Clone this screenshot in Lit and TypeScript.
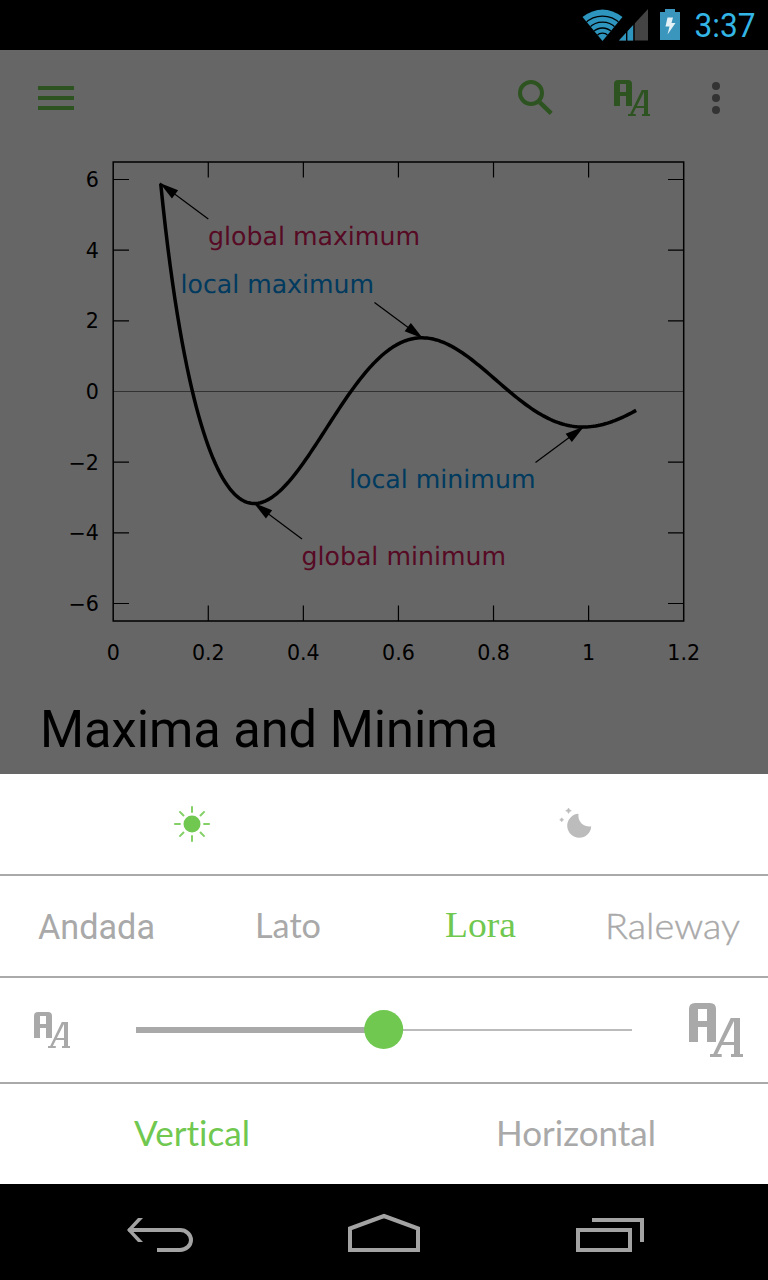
import { LitElement, html, svg, css } from "lit";
import { customElement, property } from "lit/decorators.js";

const AA = svg`<path fill-rule="evenodd" d="M0 26V4Q0 0 4 0H14Q18 0 18 4V26H12V16H6V26ZM6 4V12H12V4Z"/>
  <path fill-rule="evenodd" d="M14 34H16.2L27.8 10H34V34H36V36H28V34H30V28H21.9L18.9 34H21.8V36H14ZM22.9 26H30V12Z"/>`;

@customElement("aa-icon")
class AaIcon extends LitElement {
  static styles = css`:host { display: block; } svg { display: block; width: 100%; height: 100%; fill: currentColor; }`;
  render() { return html`<svg viewBox="0 0 36 36">${AA}</svg>`; }
}

@customElement("status-bar")
class StatusBar extends LitElement {
  static styles = css`
    :host { display: block; height: 50px; background: #000; }
    svg { display: block; }
    text { font-family: Roboto, sans-serif; font-size: 32.5px; fill: #33b5e5; }
  `;
  render() {
    return html`<svg width="768" height="50" viewBox="0 0 768 50">
      <clipPath id="fan"><path d="M602.5 41L582.5 17Q602.5 2 622.5 17Z"/></clipPath>
      <g clip-path="url(#fan)">
        <circle cx="602.5" cy="43" r="34" fill="#2d95be"/>
        <g fill="none" stroke="#000" stroke-width="1.3">
          <circle cx="602.5" cy="41" r="24.8"/><circle cx="602.5" cy="41" r="18.8"/>
          <circle cx="602.5" cy="41" r="13"/><circle cx="602.5" cy="41" r="7.8"/>
        </g>
      </g>
      <path d="M619 40.5L648 9V40.5Z" fill="#444"/>
      <path d="M619 40.5L633.5 24.8V40.5Z" fill="#2d95be"/>
      <path d="M626.7 30V41M634 23V41" stroke="#000" stroke-width="1.4"/>
      <path d="M660 12H665V9H675V12H680V40H660Z" fill="#3a96bd"/>
      <path d="M667.5 17.5H673L671.5 23H675.5L667.5 34.5L669.5 26.5H665.5Z" fill="#e4f1f6"/>
      <text x="694.5" y="37" textLength="61" lengthAdjust="spacingAndGlyphs">3:37</text>
    </svg>`;
  }
}

@customElement("top-bar")
class TopBar extends LitElement {
  static styles = css`
    :host { display: flex; align-items: center; height: 96px; box-sizing: border-box; padding: 0 48px 0 38px; color: #2d5420; }
    svg { display: block; fill: none; stroke: currentColor; stroke-width: 4; }
    .menu { margin-right: auto; }
    .search { margin-right: 61px; }
    .fonts { width: 36px; height: 36px; margin-right: 62px; }
    .more { fill: #333; stroke: none; }
  `;
  render() {
    return html`
      <svg class="menu" width="36" height="24"><path d="M0 2H36M0 12H36M0 22H36"/></svg>
      <svg class="search" width="35" height="36"><circle cx="13" cy="13" r="11"/><path d="M21.8 22.3L33.2 33.3" stroke-width="4.4"/></svg>
      <aa-icon class="fonts"></aa-icon>
      <svg class="more" width="8" height="32"><circle cx="4" cy="4" r="4"/><circle cx="4" cy="16" r="4"/><circle cx="4" cy="28" r="4"/></svg>
    `;
  }
}

const px = (x: number) => 113.2 + x * 475.4;
const py = (y: number) => 391.5 - y * 35.33;

@customElement("extrema-chart")
class ExtremaChart extends LitElement {
  static styles = css`
    :host { display: block; height: 534px; }
    svg { display: block; }
    .axis { font: 20.6px "DejaVu Sans", sans-serif; fill: #000; }
    .note { font: 25.4px "DejaVu Sans", sans-serif; text-rendering: geometricPrecision; }
    .global { fill: #560a24; }
    .local { fill: #003a5e; }
    .tick { stroke: #000; stroke-width: 1.2; }
    .frame { fill: none; stroke: #000; stroke-width: 1.5; }
    .zero { stroke: #333; stroke-width: 1; }
    .curve { fill: none; stroke: #000; stroke-width: 3.5; stroke-linejoin: round; }
  `;
  arrow(x1: number, y1: number, x2: number, y2: number) {
    const a = (Math.atan2(y2 - y1, x2 - x1) * 180) / Math.PI;
    return svg`<line class="tick" x1=${x1} y1=${y1} x2=${x2} y2=${y2}></line>
      <path transform="translate(${x2} ${y2}) rotate(${a})" d="M0 0L-19 -5.2V5.2Z"/>`;
  }
  render() {
    const pts: string[] = [];
    for (let i = 0; i <= 200; i++) {
      const x = 0.1 + i / 200;
      pts.push(`${px(x).toFixed(2)},${py(Math.cos(3 * Math.PI * x) / x).toFixed(2)}`);
    }
    const xs = [0, 0.2, 0.4, 0.6, 0.8, 1, 1.2];
    const ys = [6, 4, 2, 0, -2, -4, -6];
    return html`<svg width="768" height="534" viewBox="0 146 768 534">
      <line class="zero" x1="113" x2="684" y1="391.5" y2="391.5"></line>
      <rect class="frame" x="113.2" y="162" width="570.5" height="459"></rect>
      ${xs.map((x) => svg`
        ${x > 0 && x < 1.2 ? svg`<path class="tick" d="M${px(x)} 162V177.5M${px(x)} 621V605.5"/>` : ""}
        <text class="axis" text-anchor="middle" x=${px(x)} y="659.5">${x}</text>`)}
      ${ys.map((y) => svg`
        ${y ? svg`<path class="tick" d="M113 ${py(y)}H129M684 ${py(y)}H668"/>` : ""}
        <text class="axis" text-anchor="end" x="98.8" y=${py(y) + 7.6}>${String(y).replace("-", "−")}</text>`)}
      <polyline class="curve" points=${pts.join(" ")}></polyline>
      ${this.arrow(208.3, 219, 159.8, 183)}
      ${this.arrow(374.5, 302.5, 423, 338.5)}
      ${this.arrow(535.5, 462.5, 584, 426.5)}
      ${this.arrow(302, 539, 253.8, 503)}
      <text class="note global" x="208" y="244.6" textLength="212" lengthAdjust="spacingAndGlyphs">global maximum</text>
      <text class="note local" x="180.5" y="292.8" textLength="193.5" lengthAdjust="spacingAndGlyphs">local maximum</text>
      <text class="note local" x="349" y="487.8" textLength="186.5" lengthAdjust="spacingAndGlyphs">local minimum</text>
      <text class="note global" x="301.5" y="564.6" textLength="204.5" lengthAdjust="spacingAndGlyphs">global minimum</text>
    </svg>`;
  }
}

@customElement("font-name")
class FontName extends LitElement {
  @property() name = "";
  @property() face = "lato";
  @property({ type: Number }) width = 100;
  @property({ type: Number }) base = 37;
  static styles = css`
    :host { display: flex; justify-content: center; }
    svg { display: block; overflow: visible; fill: currentColor; }
    .andada { font: 35px Roboto, sans-serif; }
    .lato { font: 35.5px Lato, sans-serif; font-variant-ligatures: none; }
    .lora { font: 36.5px "Liberation Serif", serif; }
    .raleway { font: 300 35px Lato, sans-serif; stroke: currentColor; stroke-width: .4; }
  `;
  render() {
    return html`<svg width=${this.width} height="50"><text class=${this.face} x="0" y=${this.base} textLength=${this.width} lengthAdjust="spacingAndGlyphs">${this.name}</text></svg>`;
  }
}

@customElement("reader-settings")
class ReaderSettings extends LitElement {
  static styles = css`
    :host { display: grid; grid-template-rows: 102px 102px 106px 100px; height: 410px; background: #fff; color: #a9a9a9; }
    .row { display: grid; grid-auto-flow: column; grid-auto-columns: 1fr; align-items: center; box-sizing: border-box; border-bottom: 2px solid #aaa; }
    .row:last-child { border-bottom: 0; }
    .size { grid-template-columns: 102px 496px 57px 54px; padding: 0 25px 0 34px; }
    .small { width: 36px; height: 36px; }
    .large { height: 54px; grid-column: 4; }
    .on { color: #70c850; }
    svg { display: block; justify-self: center; }
  `;
  render() {
    return html`
      <div class="row">
        <svg width="36" height="36" viewBox="-18 -18 36 36">
          <circle r="8.5" fill="#70c850"/>
          ${[0, 45, 90, 135, 180, 225, 270, 315].map((a) => svg`<path transform="rotate(${a})" d="M11.3 0H17.8" stroke="#82d066" stroke-width="2"/>`)}
        </svg>
        <svg width="36" height="36" viewBox="558 806 36 36" fill="#bcbcbc">
          <path d="M578.5 813.8A12 12 0 1 0 591.2 826.3A10.8 10.8 0 0 1 578.5 813.8Z"/>
          <path d="M568.5 808L569.5 809.8L571.3 810.7L569.5 811.6L568.5 813.4L567.5 811.6L565.7 810.7L567.5 809.8ZM561.7 817.8L562.5 819L563.7 819.8L562.5 820.6L561.7 821.8L560.9 820.6L559.7 819.8L560.9 819Z" stroke="#bcbcbc" stroke-width=".6"/>
        </svg>
      </div>
      <div class="row">
        <font-name name="Andada" face="andada" width="117" base="38"></font-name>
        <font-name name="Lato" face="lato" width="66"></font-name>
        <font-name class="on" name="Lora" face="lora" width="71" base="36"></font-name>
        <font-name name="Raleway" face="raleway" width="135" base="38"></font-name>
      </div>
      <div class="row size">
        <aa-icon class="small"></aa-icon>
        <svg width="496" height="40">
          <path d="M248 20H496" stroke="#bbb" stroke-width="2"/>
          <path d="M0 20H248" stroke="#a9a9a9" stroke-width="6"/>
          <circle cx="247.7" cy="19.5" r="19.5" fill="#70c850"/>
        </svg>
        <aa-icon class="large"></aa-icon>
      </div>
      <div class="row">
        <font-name class="on" name="Vertical" width="116"></font-name>
        <font-name name="Horizontal" width="160"></font-name>
      </div>
    `;
  }
}

@customElement("nav-bar")
class NavBar extends LitElement {
  static styles = css`
    :host { display: block; height: 96px; background: #000; }
    svg { display: block; fill: none; stroke: #a3a3a3; stroke-width: 4; }
    .head { fill: #a3a3a3; stroke: none; }
  `;
  render() {
    return html`<svg width="768" height="96" viewBox="0 1184 768 96">
      <path d="M128.5 1230H180A11 10 0 0 1 191 1240A11 10 0 0 1 180 1250H157"/>
      <path class="head" d="M138 1218H143L131.5 1230L143 1242H138L127 1230Z"/>
      <path d="M350 1250V1228.5L384 1216L418 1228.5V1250Z"/>
      <path d="M578 1230H630V1250H578ZM592 1220H642V1242"/>
    </svg>`;
  }
}

@customElement("app-root")
class AppRoot extends LitElement {
  static styles = css`
    :host { display: flex; flex-direction: column; width: 768px; height: 1280px; background: #666; overflow: hidden; }
    .title { height: 94px; padding-left: 40px; }
    .title svg { display: block; }
    .title text { font: 52px Roboto, sans-serif; fill: #000; }
  `;
  render() {
    return html`
      <status-bar></status-bar>
      <top-bar></top-bar>
      <extrema-chart></extrema-chart>
      <div class="title"><svg width="500" height="94"><text x="0" y="66.5" textLength="458" lengthAdjust="spacingAndGlyphs">Maxima and Minima</text></svg></div>
      <reader-settings></reader-settings>
      <nav-bar></nav-bar>
    `;
  }
}
